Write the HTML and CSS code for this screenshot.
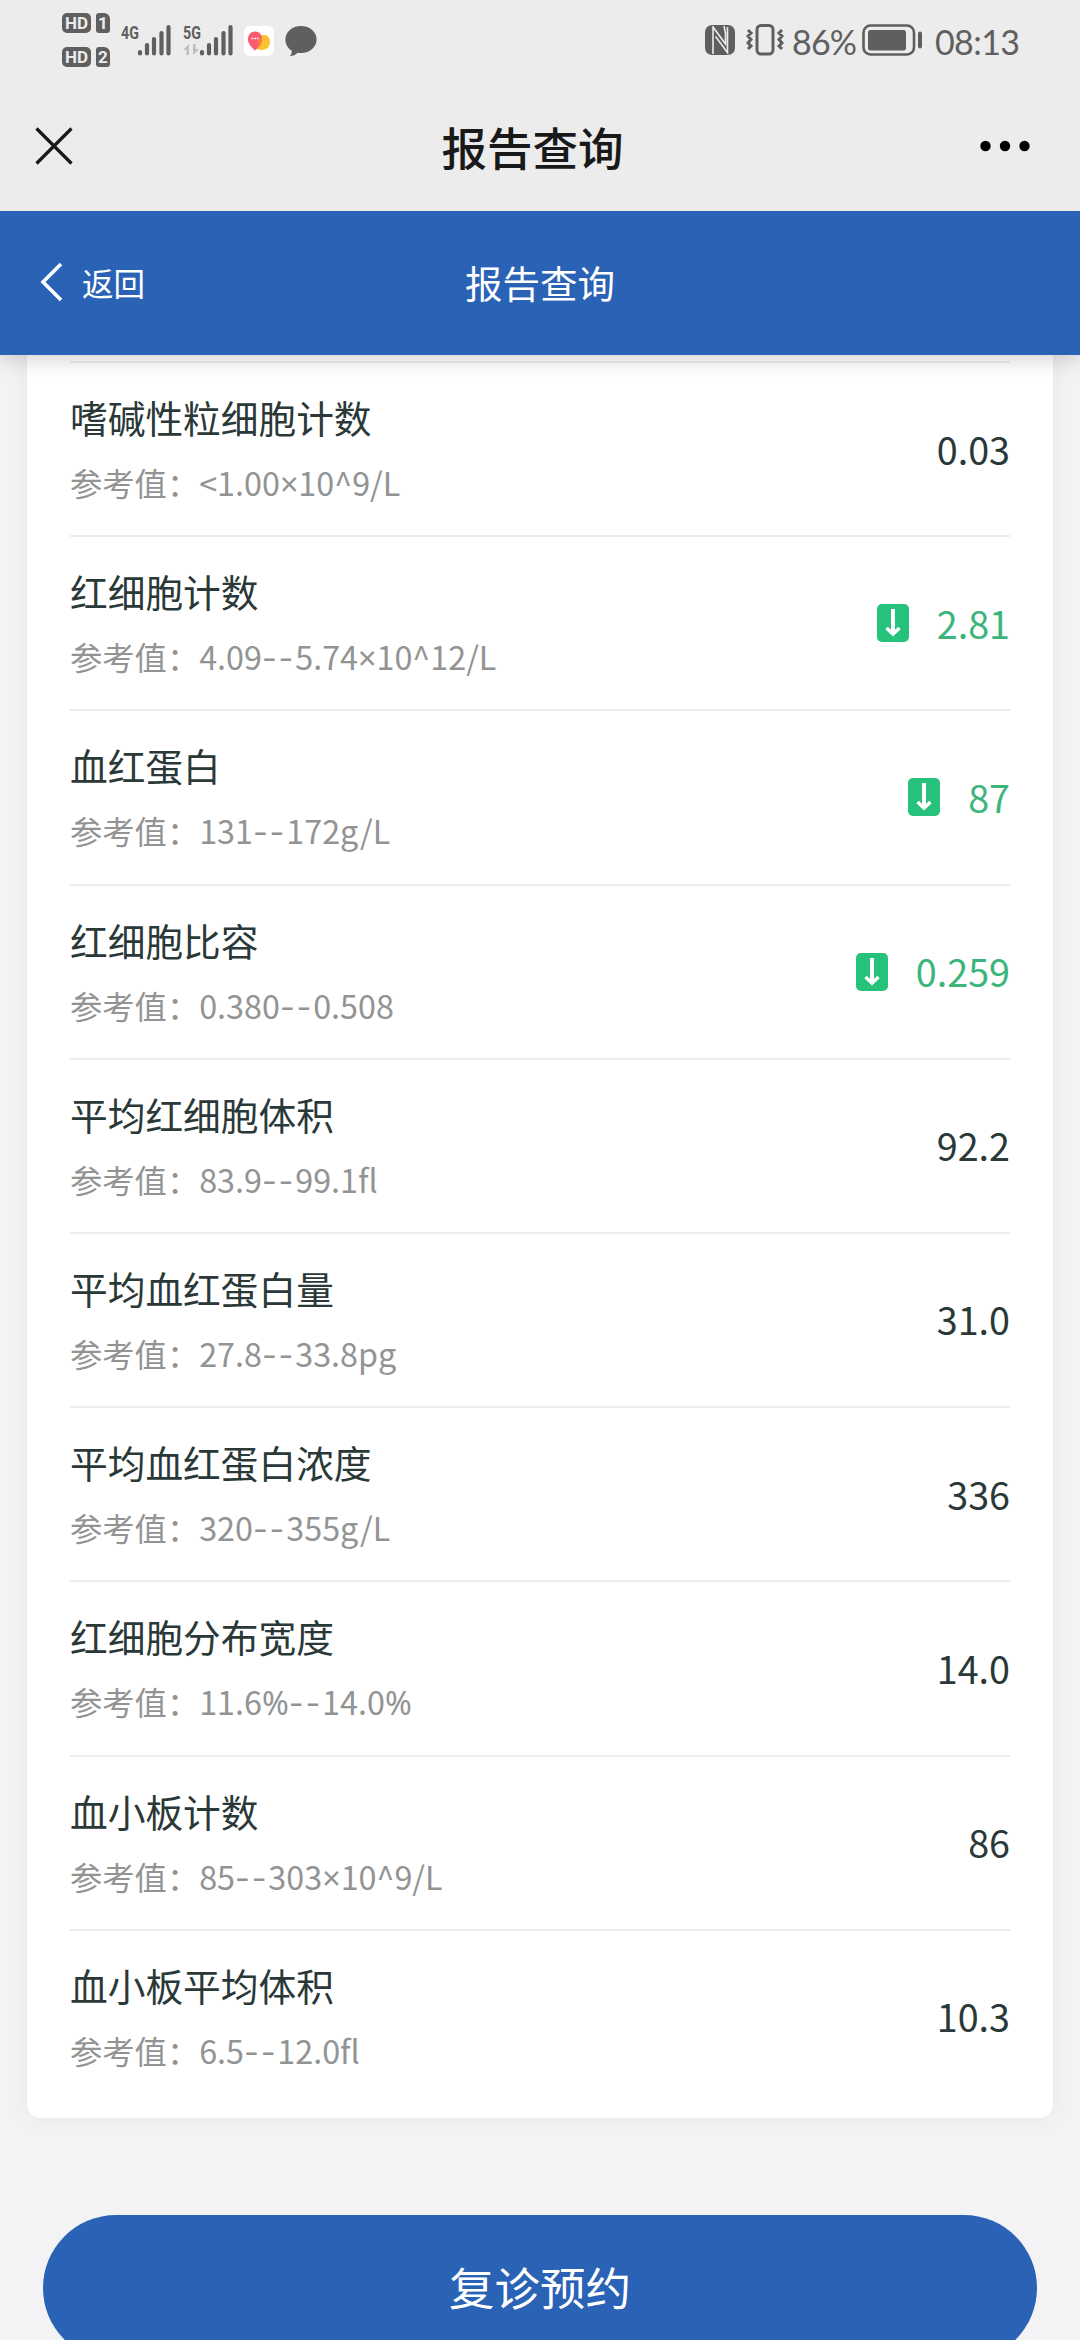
FILE: index.html
```html
<!DOCTYPE html>
<html lang="zh-CN">

<head>
  <meta charset="UTF-8">
  <meta name="viewport" content="width=device-width, initial-scale=1.0">
  <title>报告查询</title>
  <link rel="stylesheet" href="styles.css">
</head>

<body>
  <div class="status-bar">
    <div class="sims">
      <div class="sim"><span class="hd">HD</span><span class="sim-num">1</span></div>
      <div class="sim"><span class="hd">HD</span><span class="sim-num">2</span></div>
    </div>
    <div class="signal">
      <div class="net"><span>4G</span></div>
      <svg class="bars" viewBox="0 0 34 32">
        <path d="M3 28v1.500M10 21v8.500M17 15v14.500M24.500 9v20.500M31.500 3v26.500" />
      </svg>
    </div>
    <div class="signal signal-2">
      <div class="net"><span>5G</span>
        <svg width="16" height="11" viewBox="0 0 16 11">
          <path d="M0 6L6 0v11H3.500V6zM16 5l-6 6V0h2.500v5z" fill="#bdbdbd" />
        </svg>
      </div>
      <svg class="bars" viewBox="0 0 34 32">
        <path d="M3 28v1.500M10 21v8.500M17 15v14.500M24.500 9v20.500M31.500 3v26.500" />
      </svg>
    </div>
    <svg class="app-icon" width="30" height="30" viewBox="0 0 30 30">
      <rect width="30" height="30" rx="6" fill="#fff" />
      <path d="M14 23.500c-3 0-2-9 0-12 2-3.500 12-4 12 4.500 0 5-4 8-8 8z" fill="#fbc02f" />
      <path d="M11 24.500C7 21 4 17.500 4 13c0-4.500 3-7.500 7.200-7.500S18 8.500 18 13c0 4.500-3 8-7 11.500z" fill="#fb5b70" />
      <path d="M14 21.500c2.500-2.500 4-5.500 4-8.500 0-1-.2-2-.5-2.500-3 1.500-5 6-3.500 11z" fill="#f9793f" />
      <path d="M7.500 12.500h7" stroke="#fff" stroke-width="1.500" stroke-dasharray="1.700 1" />
    </svg>
    <svg class="chat-icon" width="32" height="31" viewBox="0 0 32 31">
      <path d="M16 0c9 0 15.600 6 15.600 13.500S25 27 16 27c-1.200 0-2.300-.1-3.400-.3C10.500 29 8 30 5 30c1.300-1.600 1.900-3.300 1.800-5.200C2.800 22.300.4 18.200.4 13.500.4 6 7 0 16 0z" fill="#5f5f5f" />
    </svg>
    <svg class="nfc-icon" width="30" height="30" viewBox="0 0 30 30">
      <rect width="30" height="30" rx="7" fill="#5f5f5f" />
      <path d="M8 1v28M8 2l12.500 17V8L19 1M10.500 11.500L22.500 27.500V2" fill="none" stroke="#ececec" stroke-width="1.600" />
    </svg>
    <svg class="vibrate-icon" width="38" height="32" viewBox="0 0 38 32">
      <rect x="11" y="1.500" width="16" height="28.500" rx="4" />
      <path d="M2 6l3 3-3 3 3 3.500-3 3.500 3 3-3 3M36 6l-3 3 3 3-3 3.500 3 3.500-3 3 3 3" />
    </svg>
    <span class="percent">86%</span>
    <svg class="battery-icon" width="61" height="32" viewBox="0 0 61 32">
      <rect x="1.500" y="1.500" width="50.500" height="29" rx="7" fill="none" stroke="#5f5f5f" stroke-width="2.600" />
      <rect x="6" y="6" width="38" height="20.500" rx="2.500" fill="#5f5f5f" />
      <rect x="56" y="7.500" width="4" height="17" rx="2" fill="#5f5f5f" />
    </svg>
    <span class="clock">08:13</span>
  </div>

  <div class="nav-bar">
    <svg width="50" height="38" viewBox="0 0 50 38">
      <path d="M1.500 1.500l35 35M36.500 1.500l-35 35" stroke="#191919" stroke-width="3.200" />
    </svg>
    <div class="nav-title">报告查询</div>
    <svg width="50" height="12" viewBox="0 0 50 12">
      <circle cx="5.500" cy="6" r="5.200" />
      <circle cx="25" cy="6" r="5.200" />
      <circle cx="44.500" cy="6" r="5.200" />
    </svg>
  </div>

  <header>
    <a class="back">
      <svg width="24" height="40" viewBox="0 0 24 40">
        <path d="M21 2L3 20l18 18" fill="none" stroke="#fff" stroke-width="3.600" />
      </svg>
      <span>返回</span>
    </a>
    <div class="header-title">报告查询</div>
  </header>

  <div class="card">
    <div class="row">
      <div>
        <div class="name">嗜碱性粒细胞计数</div>
        <div class="range">参考值：&lt;1.00<span class="sym">×</span>10^9/L</div>
      </div>
      <div class="value">0.03</div>
    </div>
    <div class="row">
      <div>
        <div class="name">红细胞计数</div>
        <div class="range">参考值：4.09<span class="dash">--</span>5.74<span class="sym">×</span>10^12/L</div>
      </div>
      <div class="value low">
        <svg class="down" viewBox="0 0 32 38"><path d="M16 5v25" stroke-width="4" /><path d="M9.500 24l6.500 6 6.500-6" stroke-width="3.500" /></svg>
        <span>2.81</span>
      </div>
    </div>
    <div class="row">
      <div>
        <div class="name">血红蛋白</div>
        <div class="range">参考值：131<span class="dash">--</span>172g/L</div>
      </div>
      <div class="value low">
        <svg class="down" viewBox="0 0 32 38"><path d="M16 5v25" stroke-width="4" /><path d="M9.500 24l6.500 6 6.500-6" stroke-width="3.500" /></svg>
        <span>87</span>
      </div>
    </div>
    <div class="row">
      <div>
        <div class="name">红细胞比容</div>
        <div class="range">参考值：0.380<span class="dash">--</span>0.508</div>
      </div>
      <div class="value low">
        <svg class="down" viewBox="0 0 32 38"><path d="M16 5v25" stroke-width="4" /><path d="M9.500 24l6.500 6 6.500-6" stroke-width="3.500" /></svg>
        <span>0.259</span>
      </div>
    </div>
    <div class="row">
      <div>
        <div class="name">平均红细胞体积</div>
        <div class="range">参考值：83.9<span class="dash">--</span>99.1fl</div>
      </div>
      <div class="value">92.2</div>
    </div>
    <div class="row">
      <div>
        <div class="name">平均血红蛋白量</div>
        <div class="range">参考值：27.8<span class="dash">--</span>33.8pg</div>
      </div>
      <div class="value">31.0</div>
    </div>
    <div class="row">
      <div>
        <div class="name">平均血红蛋白浓度</div>
        <div class="range">参考值：320<span class="dash">--</span>355g/L</div>
      </div>
      <div class="value">336</div>
    </div>
    <div class="row">
      <div>
        <div class="name">红细胞分布宽度</div>
        <div class="range">参考值：11.6<span class="sym">%</span><span class="dash">--</span>14.0<span class="sym">%</span></div>
      </div>
      <div class="value">14.0</div>
    </div>
    <div class="row">
      <div>
        <div class="name">血小板计数</div>
        <div class="range">参考值：85<span class="dash">--</span>303<span class="sym">×</span>10^9/L</div>
      </div>
      <div class="value">86</div>
    </div>
    <div class="row">
      <div>
        <div class="name">血小板平均体积</div>
        <div class="range">参考值：6.5<span class="dash">--</span>12.0fl</div>
      </div>
      <div class="value">10.3</div>
    </div>
  </div>

  <button class="button-reserva">复诊预约</button>
</body>

</html>
```
FILE: styles.css
```css
* {
  box-sizing: border-box;
}

body {
  margin: 0px;
  height: 2340px;
  overflow: hidden;
  background-color: #f3f3f6;
  font-family: "Noto Sans CJK SC", sans-serif;
}

svg {
  display: block;
  flex-shrink: 0;
}

/* status bar */
.status-bar {
  display: flex;
  align-items: center;
  height: 80px;
  padding-left: 62px;
  background-color: #ececec;
  color: #5f5f5f;
}

.sims {
  display: flex;
  flex-direction: column;
  gap: 14px;
  width: 59px;
}

.sim {
  display: flex;
  gap: 5px;
  height: 20px;
  font-family: Roboto, sans-serif;
  font-weight: bold;
  font-size: 17px;
  line-height: 20px;
  text-align: center;
  color: #ececec;
}

.hd {
  width: 29px;
  border-radius: 5px;
  background-color: #5f5f5f;
}

.sim-num {
  width: 14px;
  border-radius: 3px 6px 3px 3px;
  background-color: #5f5f5f;
}

.signal {
  display: flex;
  height: 32px;
  width: 62px;
}

.net {
  width: 16px;
  font-family: Roboto, sans-serif;
  font-weight: bold;
  font-size: 19px;
  line-height: 17px;
}

.net span {
  display: block;
  width: 24px;
  transform: scaleX(0.75);
  transform-origin: left;
}

.net svg {
  margin-top: 3px;
}

.bars {
  width: 34px;
  height: 32px;
  fill: none;
  stroke: #5f5f5f;
  stroke-width: 4.2;
  stroke-linecap: round;
}

.signal-2 {
  width: 61px;
}

.app-icon {
  margin-top: 2px;
}

.chat-icon {
  margin: 2px 0px 0px 11px;
}

.nfc-icon {
  margin-left: 388px;
}

.vibrate-icon {
  margin-left: 11px;
  fill: none;
  stroke: #5f5f5f;
  stroke-width: 3;
}

.percent,
.clock {
  font-family: Lato, sans-serif;
  font-size: 34px;
  line-height: 40px;
  margin-top: 3px;
}

.percent {
  width: 70px;
  padding-left: 8px;
  letter-spacing: -0.8px;
}

.battery-icon {
  margin-left: 8px;
}

.clock {
  margin-left: 12px;
  letter-spacing: -0.6px;
}

/* browser bar */
.nav-bar {
  position: relative;
  z-index: 2;
  display: flex;
  justify-content: space-between;
  align-items: center;
  height: 131px;
  padding: 0px 50px 0px 35px;
  background-color: #ececec;
}

.nav-title {
  padding-right: 0px;
  margin-left: -14px;
  transform: translateX(7px);
  font-size: 45.5px;
  font-weight: 500;
  color: #191919;
}

/* page header */
header {
  position: relative;
  display: flex;
  justify-content: center;
  align-items: center;
  height: 144px;
  padding-bottom: 3px;
  background-color: #2a62b6;
  color: white;
  box-shadow: 0px 3px 22px rgba(0, 0, 0, 0.2);
}

.back {
  position: absolute;
  left: 40px;
  display: flex;
  align-items: center;
  gap: 18px;
  font-size: 31.5px;
}

.header-title {
  font-size: 37.5px;
}

/* results */
.card {
  margin: 0px 27px;
  padding: 6px 43px 15px;
  background-color: white;
  border-radius: 0px 0px 14px 14px;
  box-shadow: 0px 0px 24px rgba(0, 0, 0, 0.05);
}

.row {
  display: flex;
  justify-content: space-between;
  height: 174.2px;
  padding-top: 26px;
  border-top: 2px solid #ededee;
}

.name {
  font-size: 37.7px;
  line-height: 56px;
  color: #2a3838;
}

.range {
  margin-top: 14px;
  font-size: 32.3px;
  line-height: 46px;
  color: #929494;
}

.dash {
  font-family: Inter, sans-serif;
  letter-spacing: 1.8px;
}

.sym {
  font-family: "Noto Sans", sans-serif;
}

.value {
  display: flex;
  align-items: center;
  gap: 28px;
  height: 118px;
  font-size: 37.7px;
  color: #2a3838;
}

.low {
  color: #3cb57c;
}

.down {
  width: 32px;
  height: 38px;
  margin-top: 2px;
  border-radius: 5px;
  background-color: #26c17a;
  fill: none;
  stroke: white;
}

.button-reserva {
  display: block;
  width: 994px;
  height: 146px;
  margin: 97px auto 0px;
  padding-bottom: 4px;
  border: none;
  border-radius: 73px;
  background-color: #2a62b6;
  color: white;
  font-family: inherit;
  font-size: 45.5px;
}
```
